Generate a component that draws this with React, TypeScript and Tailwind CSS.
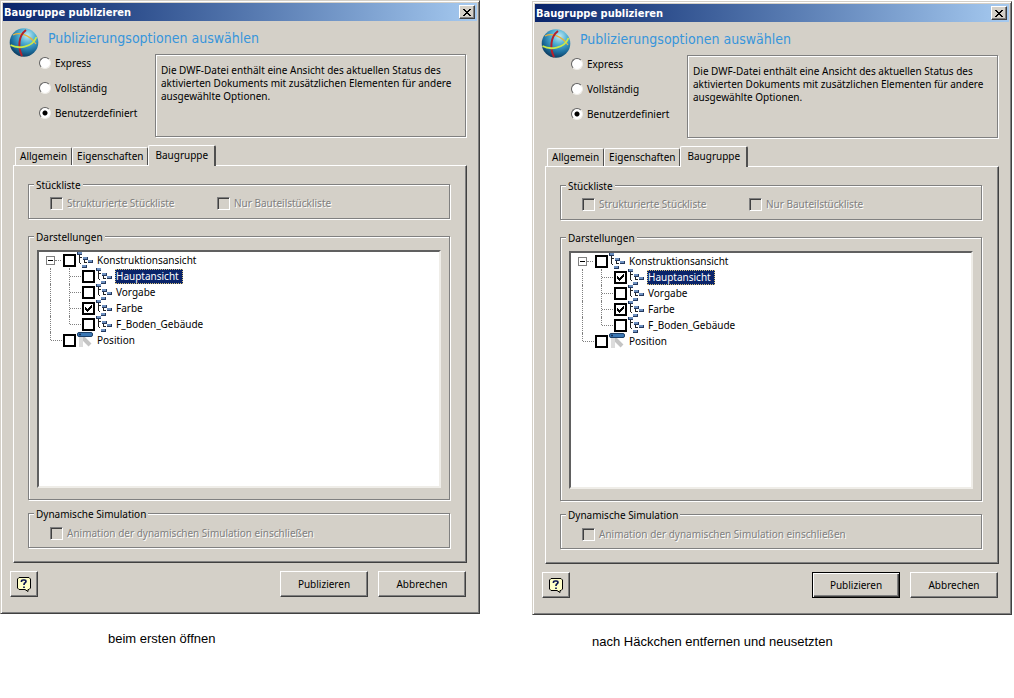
import React, { useId, useState } from 'react';
import clsx from 'clsx';

type Mode = 'express' | 'full' | 'custom';

interface TreeNode {
  id: string;
  label: string;
  level: 0 | 1;
  icon: 'view' | 'position';
}

interface PublishDialogProps {
  initialChecked: string[];
  primaryFocused?: boolean;
}

const modes: { value: Mode; label: string }[] = [
  { value: 'express', label: 'Express' },
  { value: 'full', label: 'Vollständig' },
  { value: 'custom', label: 'Benutzerdefiniert' }
];

const tabs = ['Allgemein', 'Eigenschaften', 'Baugruppe'];

const nodes: TreeNode[] = [
  { id: 'root', label: 'Konstruktionsansicht', level: 0, icon: 'view' },
  { id: 'main', label: 'Hauptansicht', level: 1, icon: 'view' },
  { id: 'default', label: 'Vorgabe', level: 1, icon: 'view' },
  { id: 'color', label: 'Farbe', level: 1, icon: 'view' },
  { id: 'floor', label: 'F_Boden_Gebäude', level: 1, icon: 'view' },
  { id: 'position', label: 'Position', level: 0, icon: 'position' }
];

const raised =
  'border border-t-white border-l-white border-r-[#404040] border-b-[#404040] shadow-[inset_-1px_-1px_0_#808080] bg-[#d4d0c8]';

function GlobeIcon() {
  return (
    <svg viewBox="0 0 30 30" className="w-[30px] h-[30px] shrink-0" aria-hidden="true">
      <defs>
        <radialGradient id="globe" cx="0.62" cy="0.25" r="0.8">
          <stop offset="0" stopColor="#c4eaf4" />
          <stop offset="0.35" stopColor="#4fb0d4" />
          <stop offset="0.7" stopColor="#1d6f9f" />
          <stop offset="1" stopColor="#0a3558" />
        </radialGradient>
      </defs>
      <circle cx="15" cy="14.5" r="14.3" fill="url(#globe)" />
      <path d="M4 7C10 4 20 6 27 16" fill="none" stroke="#e8b23e" strokeWidth="1.3" />
      <path d="M17 2C9 8 9 20 13 28" fill="none" stroke="#b3202c" strokeWidth="2" />
      <path d="M1.500 17C9 21 23 20 27.500 9" fill="none" stroke="#c9e94a" strokeWidth="1.8" />
    </svg>
  );
}

function ViewIcon() {
  return (
    <svg viewBox="0 0 16 16" className="w-4 h-4 shrink-0" shapeRendering="crispEdges" aria-hidden="true">
      <path d="M2 3h1v8h-1zM3 5h2v1h-2zM7 8h1v3h-1zM8 10h2v1h-2zM3 11h1v1h-1z" fill="#222" />
      <path d="M0 0h5v3H0zM6 5h5v3H6zM11 8h5v3h-5zM5 13h5v3H5z" fill="#24395e" />
      <path d="M1 0h4v2H1zM6 5h4v2H6zM11 8h4v2h-4zM5 13h4v2H5z" fill="#6d90c0" />
    </svg>
  );
}

function PositionIcon() {
  return (
    <svg viewBox="0 0 16 16" className="w-4 h-4 shrink-0" aria-hidden="true">
      <path d="M3 3L13 13" stroke="#c4c4c4" strokeWidth="4" />
      <path d="M4 4V15" stroke="#dcdcdc" strokeWidth="4" />
      <rect x="0.500" y="0.500" width="15" height="4" rx="1.500" fill="#3c78b4" stroke="#1b3f68" />
      <circle cx="3" cy="2.500" r="1" fill="#16294a" />
    </svg>
  );
}

interface GroupProps {
  title: string;
  className?: string;
  children: React.ReactNode;
}

function Group({ title, className, children }: GroupProps) {
  return (
    <fieldset
      className={clsx(
        'min-w-0 border border-[#808080] px-2 shadow-[1px_1px_0_#fff,inset_1px_1px_0_#fff]',
        className
      )}
    >
      <legend className="-ml-[3px] px-[2px] pt-[2px] leading-[11px] bg-[#d4d0c8]">{title}</legend>
      {children}
    </fieldset>
  );
}

function DisabledCheck({ label }: { label: string }) {
  return (
    <label className="flex items-center gap-1 text-[#808080] [text-shadow:1px_1px_0_#fff]">
      <input
        type="checkbox"
        disabled
        className="appearance-none w-[13px] h-[13px] border border-t-[#808080] border-l-[#808080] border-r-white border-b-white shadow-[inset_1px_1px_0_#404040]"
      />
      {label}
    </label>
  );
}

// Dotted connector lines in front of each tree row
function Guides({ node, last }: { node: TreeNode; last: boolean }) {
  if (node.level === 1) {
    return (
      <span className="flex h-full items-start pl-[11px] pr-px">
        <span className="h-full border-l border-dotted border-[#808080]" />
        <span className={clsx('ml-[18px] border-l border-dotted border-[#808080]', last ? 'h-2' : 'h-full')} />
        <span className="w-[11px] self-center border-t border-dotted border-[#808080]" />
      </span>
    );
  }
  if (node.id === 'root') {
    return (
      <span className="flex h-full items-center pl-[7px] pr-[2px]">
        <button
          type="button"
          aria-label="Konstruktionsansicht"
          className="flex w-[9px] h-[9px] items-center justify-center border border-[#808080] bg-white"
        >
          <span className="w-[5px] border-t border-black" />
        </button>
        <span className="w-[6px] border-t border-dotted border-[#808080]" />
      </span>
    );
  }
  return (
    <span className="flex h-full items-start pl-[11px] pr-px">
      <span className="h-2 border-l border-dotted border-[#808080]" />
      <span className="w-[11px] self-center border-t border-dotted border-[#808080]" />
    </span>
  );
}

function PublishDialog({ initialChecked, primaryFocused }: PublishDialogProps) {
  const uid = useId();
  const [mode, setMode] = useState<Mode>('custom');
  const [tab, setTab] = useState('Baugruppe');
  const [selected, setSelected] = useState('main');
  const [checked, setChecked] = useState<string[]>(initialChecked);

  const toggle = (id: string) => {
    setChecked((prev) => (prev.includes(id) ? prev.filter((c) => c !== id) : [...prev, id]));
  };

  return (
    <section className="border border-t-[#d4d0c8] border-l-[#d4d0c8] border-r-[#404040] border-b-[#404040] shadow-[inset_1px_1px_0_#fff,inset_-1px_-1px_0_#808080] bg-[#d4d0c8] px-[2px] pt-[2px] pb-4">
      {/* Title bar */}
      <header className="flex h-[18px] items-center justify-between bg-linear-to-r from-[#0a246a] to-[#a6caf0] pl-px pr-[2px] text-white">
        <h2 className="font-['DejaVu_Sans_Condensed','DejaVu_Sans',sans-serif] text-[11px] font-bold whitespace-nowrap">
          Baugruppe publizieren
        </h2>
        <button type="button" aria-label="Schließen" className={clsx('flex w-4 h-[14px] items-center justify-center', raised)}>
          <svg viewBox="0 0 8 7" className="w-2 h-[7px]" shapeRendering="crispEdges">
            <path d="M0 0h2v1h1v1h2v-1h1v-1h2v1h-1v1h-1v1h-1v1h1v1h1v1h1v1h-2v-1h-1v-1h-2v1h-1v1h-2v-1h1v-1h1v-1h1v-1h-1v-1h-1v-1h-1z" fill="#000" />
          </svg>
        </button>
      </header>

      {/* Heading */}
      <div className="flex h-[33px] items-start gap-[9px] pl-[6px] pt-[7px]">
        <GlobeIcon />
        <h1 className="font-['DejaVu_Sans_Condensed','DejaVu_Sans',sans-serif] text-[14px] leading-5 text-[#3795db] whitespace-nowrap">
          Publizierungsoptionen auswählen
        </h1>
      </div>

      {/* Mode and description */}
      <div className="flex pl-9 pr-[11px]">
        <div className="flex w-[116px] shrink-0 flex-col gap-[11px] pt-[2px]">
          {modes.map((m) => (
            <label key={m.value} className="flex h-[14px] items-center gap-1 whitespace-nowrap">
              <input
                type="radio"
                name={`${uid}-mode`}
                checked={mode === m.value}
                onChange={() => setMode(m.value)}
                className="appearance-none w-3 h-3 rounded-full border border-t-[#606060] border-l-[#606060] border-r-[#efede8] border-b-[#efede8] bg-white checked:bg-[radial-gradient(circle,#000_2px,#fff_3px)]"
              />
              {m.label}
            </label>
          ))}
        </div>
        <p className="min-h-[83px] flex-1 border border-[#808080] px-[5px] py-[9px] shadow-[inset_1px_1px_0_#fff,1px_1px_0_#fff]">
          Die DWF-Datei enthält eine Ansicht des aktuellen Status des aktivierten Dokuments mit zusätzlichen Elementen
          für andere ausgewählte Optionen.
        </p>
      </div>

      {/* Tabs */}
      <div className="pl-[10px] pr-[10px] pt-2">
        <div role="tablist" className="flex h-5 items-end pl-[2px]">
          {tabs.map((t) => (
            <button
              key={t}
              type="button"
              role="tab"
              aria-selected={tab === t}
              onClick={() => setTab(t)}
              className={clsx(
                'rounded-t-[2px] border-t border-l border-white bg-[#d4d0c8] whitespace-nowrap',
                tab === t
                  ? 'relative z-10 -mb-px h-[21px] border-r-2 border-r-[#505050] px-[6px] pb-px'
                  : 'h-[18px] border-r border-r-[#505050] px-1'
              )}
            >
              {t}
            </button>
          ))}
        </div>
        <div
          role="tabpanel"
          className="border border-t-white border-l-white border-r-[#404040] border-b-[#404040] pl-[14px] pr-4 pt-3 pb-[14px] shadow-[inset_-1px_-1px_0_#808080]"
        >
          <Group title="Stückliste" className="pb-2">
            <div className="grid grid-cols-[167px_1fr] pl-[13px] pt-[6px] whitespace-nowrap">
              <DisabledCheck label="Strukturierte Stückliste" />
              <DisabledCheck label="Nur Bauteilstückliste" />
            </div>
          </Group>

          <Group title="Darstellungen" className="mt-[11px] pt-[7px] pb-[11px]">
            <ul
              role="tree"
              className="min-h-[238px] border-2 border-t-[#606060] border-l-[#606060] border-r-[#efede8] border-b-[#efede8] bg-white"
            >
              {nodes.map((n) => (
                <li key={n.id} role="treeitem" aria-selected={selected === n.id} className="flex h-4 items-center">
                  <Guides node={n} last={n.id === 'floor'} />
                  <span className="relative flex w-[13px] h-[13px]">
                    <input
                      type="checkbox"
                      aria-label={n.label}
                      checked={checked.includes(n.id)}
                      onChange={() => toggle(n.id)}
                      className="appearance-none w-[13px] h-[13px] border-2 border-black bg-white"
                    />
                    {checked.includes(n.id) && (
                      <svg viewBox="0 0 13 13" className="pointer-events-none absolute inset-0 w-[13px] h-[13px]" shapeRendering="crispEdges">
                        <path d="M3 5h1v1h1v1h1v-1h1v-1h1v-1h1v-1h1v3h-1v1h-1v1h-1v1h-1v1h-1v-1h-1v-1h-1z" fill="#000" />
                      </svg>
                    )}
                  </span>
                  <span className="ml-px mr-[3px]">{n.icon === 'view' ? <ViewIcon /> : <PositionIcon />}</span>
                  <button
                    type="button"
                    onClick={() => setSelected(n.id)}
                    className={clsx(
                      'h-[15px] px-px whitespace-nowrap',
                      selected === n.id && 'bg-[#0a246a] pr-1 text-white outline-1 -outline-offset-1 outline-dotted outline-[#d8c27a]'
                    )}
                  >
                    {n.label}
                  </button>
                </li>
              ))}
            </ul>
          </Group>

          <Group title="Dynamische Simulation" className="mt-[7px] pb-[7px]">
            <div className="pl-[13px] pt-[7px] whitespace-nowrap">
              <DisabledCheck label="Animation der dynamischen Simulation einschließen" />
            </div>
          </Group>
        </div>
      </div>

      {/* Actions */}
      <footer className="flex gap-[10px] pl-[7px] pr-[11px] pt-2">
        <button type="button" aria-label="Hilfe" className={clsx('flex w-7 h-[26px] items-center justify-center', raised)}>
          <svg viewBox="0 0 14 15" className="w-[14px] h-[15px]">
            <path d="M2 0.500h10l1.500 1.500v9l-1.500 1.500h-1v2l-3-2H2L0.500 11V2z" fill="#ffffc8" stroke="#000" />
            <path d="M4.500 5V4Q4.500 3 6 3h1.500Q9 3 9 4.300T7.500 6.300Q7 7 7 8M7 9.500v1.500" fill="none" stroke="#0a1450" strokeWidth="1.700" />
          </svg>
        </button>
        <button
          type="button"
          className={clsx(
            'ml-auto w-[88px] h-[26px]',
            primaryFocused
              ? 'border border-black bg-[#d4d0c8] shadow-[inset_1px_1px_0_#fff,inset_-1px_-1px_0_#404040,inset_-2px_-2px_0_#808080]'
              : raised
          )}
        >
          Publizieren
        </button>
        <button type="button" className={clsx('w-[88px] h-[26px]', raised)}>
          Abbrechen
        </button>
      </footer>
    </section>
  );
}

export default function App() {
  return (
    <main className="grid min-h-screen grid-cols-2 items-start gap-x-[52px] bg-white pr-[2px] font-['Noto_Sans',sans-serif] text-[10px] leading-[13px] text-black">
      <figure>
        <PublishDialog initialChecked={['color']} />
        <figcaption className="pl-[108px] pt-[17px] font-['Liberation_Sans',sans-serif] text-[13px] leading-4">
          beim ersten öffnen
        </figcaption>
      </figure>
      <figure className="pt-px">
        <PublishDialog initialChecked={['main', 'color']} primaryFocused />
        <figcaption className="pl-[60px] pt-[19px] font-['Liberation_Sans',sans-serif] text-[13px] leading-4">
          nach Häckchen entfernen und neusetzten
        </figcaption>
      </figure>
    </main>
  );
}
